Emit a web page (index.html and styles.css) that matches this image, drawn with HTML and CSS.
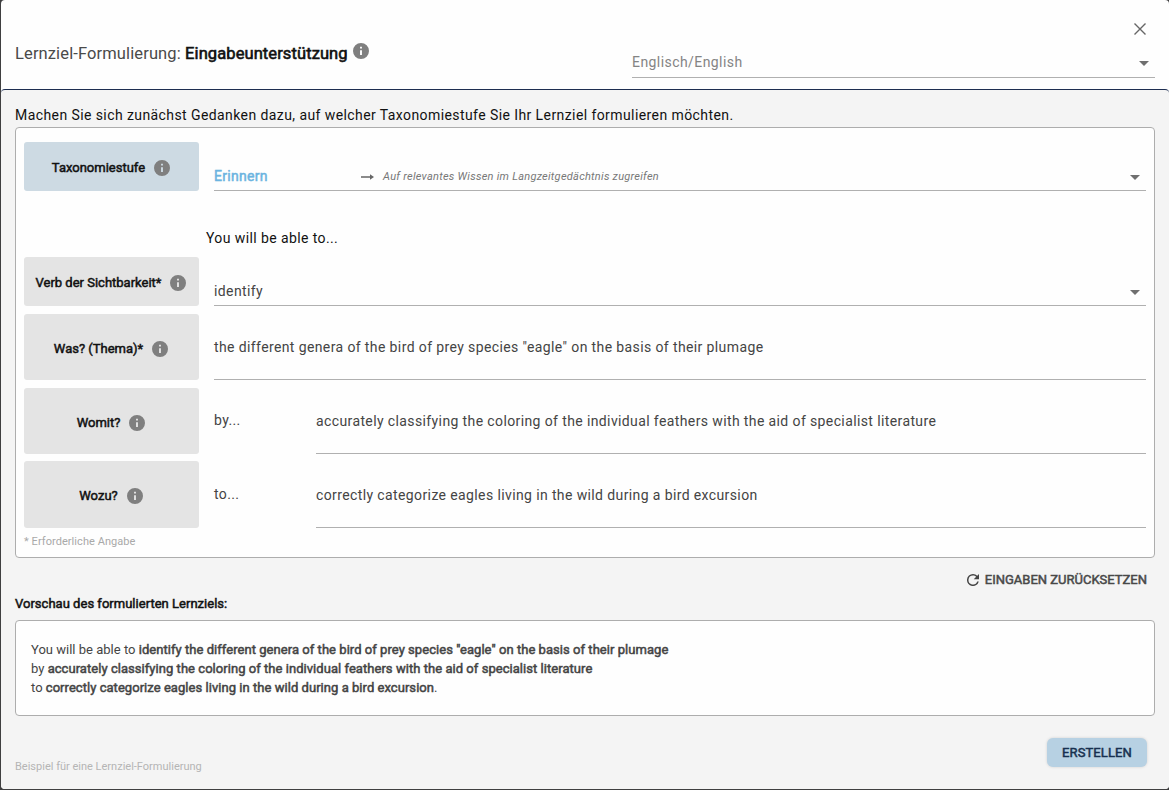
FILE: index.html
```html
<!DOCTYPE html>
<html lang="de">
<head>
<meta charset="utf-8">
<title>Lernziel-Formulierung: Eingabeunterstützung</title>
<link rel="stylesheet" href="styles.css">
</head>
<body>
<svg class="defs" aria-hidden="true">
  <symbol id="info" viewBox="2 2 20 20"><path d="M12 2a10 10 0 1 0 0 20 10 10 0 0 0 0-20zm1.2 15h-2.4v-6h2.4v6zm0-8h-2.4V6.800h2.4v2.200z"/></symbol>
  <symbol id="caret" viewBox="0 0 10 5"><path d="M0 0h10L5 5z"/></symbol>
</svg>
<main class="dialog">
  <header class="header">
    <h1 class="title"><span>Lernziel-Formulierung:</span> <b class="strong">Eingabeunterstützung</b><svg class="info title-info"><use href="#info"/></svg></h1>
    <div class="header-side">
      <button class="close" aria-label="Schließen"><svg class="close-icon" viewBox="0 0 12 12"><path d="M0.5 0.5l11 11M11.5 0.5l-11 11"/></svg></button>
      <div class="select language"><span>Englisch/English</span><svg class="caret"><use href="#caret"/></svg></div>
    </div>
  </header>
  <section class="content">
    <p class="intro">Machen Sie sich zunächst Gedanken dazu, auf welcher Taxonomiestufe Sie Ihr Lernziel formulieren möchten.</p>
    <div class="panel form">
      <div class="row">
        <div class="label label-active"><span>Taxonomiestufe</span><svg class="info"><use href="#info"/></svg></div>
        <div class="select field"><span class="level">Erinnern</span><svg class="arrow" viewBox="0 0 13 6"><path d="M0 2.3h9V0.3L13 3 9 5.7V3.7H0z"/></svg><i class="hint">Auf relevantes Wissen im Langzeitgedächtnis zugreifen</i><svg class="caret"><use href="#caret"/></svg></div>
      </div>
      <p class="lead">You will be able to...</p>
      <div class="row">
        <div class="label"><span>Verb der Sichtbarkeit*</span><svg class="info"><use href="#info"/></svg></div>
        <div class="select field"><span>identify</span><svg class="caret"><use href="#caret"/></svg></div>
      </div>
      <div class="row row-tall">
        <div class="label"><span>Was? (Thema)*</span><svg class="info"><use href="#info"/></svg></div>
        <div class="field area">the different genera of the bird of prey species "eagle" on the basis of their plumage</div>
      </div>
      <div class="row row-tall">
        <div class="label"><span>Womit?</span><svg class="info"><use href="#info"/></svg></div>
        <div class="prefix">by...</div>
        <div class="field area">accurately classifying the coloring of the individual feathers with the aid of specialist literature</div>
      </div>
      <div class="row row-last">
        <div class="label"><span>Wozu?</span><svg class="info"><use href="#info"/></svg></div>
        <div class="prefix">to...</div>
        <div class="field area">correctly categorize eagles living in the wild during a bird excursion</div>
      </div>
      <p class="required">* Erforderliche Angabe</p>
    </div>
    <button class="reset"><svg class="reset-icon" viewBox="4 4 16 16"><path d="M17.65 6.35A7.96 7.96 0 0 0 12 4a8 8 0 1 0 7.73 10h-2.08A6 6 0 1 1 12 6c1.66 0 3.14.69 4.22 1.78L13 11h7V4l-2.35 2.35z"/></svg>EINGABEN ZURÜCKSETZEN</button>
    <h2 class="preview-title">Vorschau des formulierten Lernziels:</h2>
    <div class="panel preview">
      <p>You will be able to <b>identify the different genera of the bird of prey species "eagle" on the basis of their plumage</b></p>
      <p>by <b>accurately classifying the coloring of the individual feathers with the aid of specialist literature</b></p>
      <p>to <b>correctly categorize eagles living in the wild during a bird excursion</b>.</p>
    </div>
    <footer class="footer">
      <span class="example">Beispiel für eine Lernziel-Formulierung</span>
      <button class="create">ERSTELLEN</button>
    </footer>
  </section>
</main>
</body>
</html>
```
FILE: styles.css
```css
* { box-sizing: border-box; margin: 0; }

body {
  height: 790px;
  overflow: hidden;
  background: #3f3f40;
  color: #111;
  font: 14px/20px Roboto, sans-serif;
  letter-spacing: 0.385px;
}

button { padding: 0; border: 0; background: none; font: inherit; }
b, h1, h2 { font-weight: 400; }
.defs { display: none; }

.dialog {
  display: flex;
  flex-direction: column;
  height: 789px;
  margin-left: 1px;
  background: #fefefe;
  border-radius: 4px;
  overflow: hidden;
}

.header {
  display: flex;
  justify-content: space-between;
  height: 89px;
  padding: 0 14px;
}
.title {
  padding-top: 42px;
  color: #4a4a4a;
  font-size: 16.5px;
  line-height: 24px;
  letter-spacing: 0.12px;
  white-space: nowrap;
}
.title .strong { color: #111; letter-spacing: 0.09px; -webkit-text-stroke: 0.6px; }
.info { flex: none; width: 16px; height: 16px; fill: #7f7f7f; }
.title-info { margin-left: 5px; vertical-align: 0; }
.header-side { display: flex; flex-direction: column; width: 523px; }
.close { align-self: flex-end; height: 12px; margin: 23px 9px 17px 0; }
.close-icon { display: block; width: 12px; height: 12px; stroke: #666; stroke-width: 1.4; }

.select { display: flex; align-items: center; border-bottom: 1px solid #b0b0b0; }
.caret { width: 10px; height: 5px; margin-left: auto; fill: #6f6f6f; }
.language { height: 26px; padding: 0 6px 6px 0; color: #848484; letter-spacing: 0.43px; }
.language .caret { position: relative; top: 2px; }

.content {
  flex: 1;
  padding: 15px 14px 0;
  background: #f4f4f4;
  border-top: 1px solid #1d2d50;
  border-radius: 4px 4px 0 0;
}
.intro { height: 22px; letter-spacing: 0.415px; }
.panel { background: #fefefe; border: 1px solid #adadad; border-radius: 4px; }
.form { height: 431px; padding: 14px 8px 0; }

.row { display: flex; height: 49px; }
.row-tall { height: 66px; margin-top: 8px; }
.row-last { height: 67px; margin-top: 7px; }
.label {
  display: flex;
  flex: none;
  align-items: center;
  justify-content: center;
  gap: 9px;
  width: 175px;
  margin-right: 15px;
  padding: 2px 1px 0 0;
  background: #e4e4e4;
  border-radius: 3px;
  font-size: 13px;
  letter-spacing: 0;
  -webkit-text-stroke: 0.5px;
}
.row-tall .label { padding-top: 3px; }
.label-active { background: #cddae3; }
.field { flex: 1; color: #444; border-bottom: 1px solid #b0b0b0; }
.field.select { padding: 24px 6px 4px 0; }
.area { align-self: flex-end; padding-bottom: 22px; }
.field .caret { position: relative; top: 1px; }
.level { width: 147px; color: #6cb4e0; letter-spacing: 0.28px; -webkit-text-stroke: 0.5px; }
.arrow { width: 13px; height: 6px; margin: 1px 9px 0 0; fill: #666; }
.hint { padding-top: 2px; color: #777; font-size: 11px; letter-spacing: 0.26px; }
.lead { height: 66px; padding: 37px 0 0 182px; letter-spacing: 0.4px; }
.prefix { width: 102px; padding-top: 22px; color: #444; }
.row-last .prefix { padding-top: 23px; }
.required { padding-top: 5px; color: #a9a9a9; font-size: 11px; line-height: 18px; letter-spacing: 0.06px; }

.reset {
  display: flex;
  align-items: center;
  gap: 6px;
  height: 20px;
  margin: 12px 8px 0 auto;
  color: #484848;
  font-size: 13px;
  letter-spacing: 0;
  -webkit-text-stroke: 0.5px;
}
.reset-icon { width: 12px; height: 12px; fill: #444; }
.preview-title {
  margin: 4px 0 6px;
  font-size: 13px;
  line-height: 20px;
  letter-spacing: 0.02px;
  -webkit-text-stroke: 0.5px;
}
.preview { height: 96px; padding: 19px 15px; color: #444; font-size: 13px; line-height: 19px; letter-spacing: 0.01px; }
.preview b { letter-spacing: 0.045px; -webkit-text-stroke: 0.5px; }
.footer { display: flex; justify-content: space-between; padding-top: 22px; }
.example { padding-top: 19px; color: #b5b5b5; font-size: 11px; letter-spacing: 0; }
.create {
  width: 100px;
  height: 29px;
  margin-right: 8px;
  background: #b7d1e3;
  border-radius: 6px;
  box-shadow: 0 0 3px rgba(0, 0, 0, 0.15);
  color: #17304f;
  font-size: 13px;
  letter-spacing: 0.1px;
  -webkit-text-stroke: 0.5px;
}
```
